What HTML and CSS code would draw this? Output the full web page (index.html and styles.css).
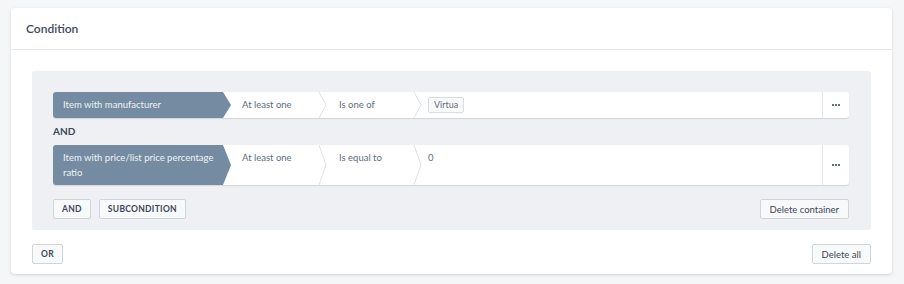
FILE: index.html
```html
<!DOCTYPE html>
<html>
<head>
    <title>Condition</title>
    <meta charset=utf-8>
    <link rel="stylesheet" href="styles.css">
</head>
<body>
    <div class="card">
        <div class="card-head">Condition</div>
        <div class="card-body">
            <div class="container">
                <div class="rule">
                    <div class="subject">Item with manufacturer</div>
                    <div class="cell c-any">At least one</div>
                    <svg class="sep" viewBox="0 0 8 10" preserveAspectRatio="none"><polyline points="0,0 7,5 0,10" vector-effect="non-scaling-stroke"/></svg>
                    <div class="cell c-op">Is one of</div>
                    <svg class="sep" viewBox="0 0 8 10" preserveAspectRatio="none"><polyline points="0,0 7,5 0,10" vector-effect="non-scaling-stroke"/></svg>
                    <div class="cell c-val"><span class="tag">Virtua</span></div>
                    <div class="more"><i></i><i></i><i></i></div>
                </div>
                <div class="joiner">AND</div>
                <div class="rule">
                    <div class="subject">Item with price/list price percentage ratio</div>
                    <div class="cell c-any">At least one</div>
                    <svg class="sep" viewBox="0 0 8 10" preserveAspectRatio="none"><polyline points="0,0 7,5 0,10" vector-effect="non-scaling-stroke"/></svg>
                    <div class="cell c-op">Is equal to</div>
                    <svg class="sep" viewBox="0 0 8 10" preserveAspectRatio="none"><polyline points="0,0 7,5 0,10" vector-effect="non-scaling-stroke"/></svg>
                    <div class="cell c-val">0</div>
                    <div class="more"><i></i><i></i><i></i></div>
                </div>
                <div class="actions">
                    <button class="btn caps">AND</button>
                    <button class="btn caps">SUBCONDITION</button>
                    <span class="spacer"></span>
                    <button class="btn">Delete container</button>
                </div>
            </div>
            <div class="actions outer">
                <button class="btn caps">OR</button>
                <span class="spacer"></span>
                <button class="btn">Delete all</button>
            </div>
        </div>
    </div>
</body>
</html>
```

FILE: styles.css
```css
body{
    margin: 0;
    padding: 8px 12px 10px 11px;
    background: #f5f6f8;
    font-family: Lato, "Liberation Sans", sans-serif;
    color: #3d4757;
}
.card{
    background: #fff;
    border-radius: 4px;
    box-shadow: 0 1px 3px rgba(40,50,70,.18);
    height: 266px;
    box-sizing: border-box;
}
.card-head{
    height: 41px;
    line-height: 42px;
    padding-left: 15px;
    font-size: 12px;
    font-weight: 600;
    color: #3e4a5c;
    border-bottom: 1px solid #e4e7eb;
}
.card-body{
    padding: 21px 21px 0 21px;
}
.container{
    background: #eff0f4;
    border-radius: 2px;
    padding: 21px 22px 11px 21px;
}
.rule{
    display: flex;
    background: #fff;
    border-radius: 3px;
    box-shadow: 0 1px 1px rgba(60,70,90,.16);
    font-size: 9.5px;
    line-height: 15px;
    color: #626d7c;
}
.subject{
    width: 178px;
    box-sizing: border-box;
    flex: none;
    padding: 5px 12px 5px 10px;
    background: #758ba2;
    color: #eef2f6;
    border-radius: 3px 0 0 3px;
    clip-path: polygon(0 0, calc(100% - 8px) 0, 100% 50%, calc(100% - 8px) 100%, 0 100%);
}
.cell{
    padding: 5px 0 5px 11px;
    flex: none;
    box-sizing: border-box;
}
.c-any{
    width: 96px;
}
.c-op{
    width: 95px;
    padding-left: 12px;
}
.c-val{
    flex: 1;
    padding-left: 6px;
}
.sep{
    width: 8px;
    flex: none;
    height: auto;
    align-self: stretch;
    margin-left: -8px;
}
.sep polyline{
    fill: none;
    stroke: #dde1e7;
    stroke-width: 1;
}
.tag{
    display: inline-block;
    margin-top: -1px;
    padding: 0 5px;
    line-height: 14px;
    font-size: 9px;
    border: 1px solid #d8dde4;
    background: #f8f9fb;
    color: #626d7c;
    border-radius: 2px;
}
.more{
    width: 26px;
    flex: none;
    border-left: 1px solid #e4e7eb;
    display: flex;
    align-items: center;
    justify-content: center;
    gap: 1px;
}
.more i{
    width: 2px;
    height: 2px;
    background: #5f6f84;
}
.joiner{
    font-size: 10px;
    font-weight: 700;
    line-height: 15px;
    margin: 6px 0;
    color: #3d4757;
}
.actions{
    display: flex;
    gap: 8px;
    margin-top: 14px;
}
.actions.outer{
    margin-top: 14px;
}
.spacer{
    flex: 1;
}
.btn{
    height: 20px;
    padding: 0 9px;
    font-family: Lato, "Liberation Sans", sans-serif;
    font-size: 9.5px;
    color: #3d4757;
    background: #f8f9fb;
    border: 1px solid #cfd5dd;
    border-radius: 2px;
}
.btn.caps{
    font-size: 8.5px;
    font-weight: 700;
    letter-spacing: .3px;
    padding: 0 8px;
}
```
